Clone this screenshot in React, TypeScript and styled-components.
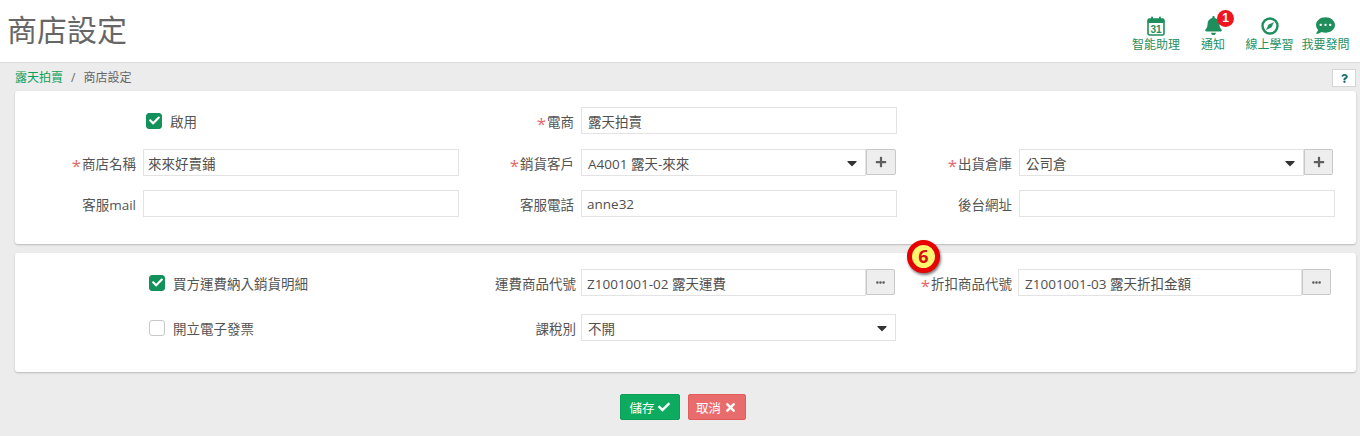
import React from "react";
import styled, { createGlobalStyle } from "styled-components";
import { FaBell, FaCommentDots, FaCheck, FaTimes, FaPlus, FaEllipsisH, FaCaretDown, FaQuestion } from "react-icons/fa";

const Global = createGlobalStyle`
  html, body { margin: 0; padding: 0; background: #ececec; }
  body { font-family: "Open Sans", "Noto Sans CJK TC", sans-serif; font-size: 13.5px; color: #555; }
`;

const Page = styled.div`
  width: 1360px;
  height: 436px;
  overflow: hidden;
  background: #ececec;
  position: relative;
`;
const Header = styled.header`
  height: 62px;
  background: #fff;
  border-bottom: 1px solid #dcdcdc;
  display: flex;
  justify-content: space-between;
`;
const Title = styled.h1`
  margin: 0;
  padding: 9px 0 0 7px;
  font-size: 30px;
  line-height: 42px;
  font-weight: 400;
  color: #666;
`;
const Tools = styled.div`
  display: flex;
  padding: 15px 6px 0 0;
`;
const Tool = styled.div<{ $w: number }>`
  width: ${(p) => p.$w}px;
  display: flex;
  flex-direction: column;
  align-items: center;
  color: #1f8f5f;
  font-size: 12px;
  line-height: 16px;
  position: relative;
`;
const ToolIcon = styled.div`
  height: 21px;
  display: flex;
  align-items: center;
  justify-content: center;
  color: #1e8f5c;
  margin-bottom: 1px;
`;
const Badge = styled.span`
  position: absolute;
  left: 33px;
  top: -5px;
  width: 17px;
  height: 17px;
  border-radius: 50%;
  background: #f0141e;
  color: #fff;
  font: 700 12px/17px "Liberation Sans", sans-serif;
  text-align: center;
`;
const Crumbs = styled.div`
  height: 28px;
  display: flex;
  align-items: center;
  justify-content: space-between;
  padding: 0 4px 0 15px;
  font-size: 12px;
  color: #666;
`;
const CrumbLink = styled.span`
  color: #0aa05a;
`;
const CrumbSep = styled.span`
  margin: 0 8px;
`;
const Help = styled.button`
  width: 24px;
  height: 18px;
  padding: 0;
  background: #fff;
  border: 1px solid #d5d5d5;
  display: flex;
  align-items: center;
  justify-content: center;
  color: #1b6f6f;
  position: relative;
  top: 1px;
`;
const Card = styled.section<{ $h: number; $pt: number }>`
  width: 1341px;
  margin: 0 0 9px 15px;
  height: ${(p) => p.$h}px;
  padding-top: ${(p) => p.$pt}px;
  box-sizing: border-box;
  background: #fff;
  border-radius: 3px;
  box-shadow: 0 1px 2px rgba(0, 0, 0, 0.22);
`;
const Row = styled.div<{ $mb?: number }>`
  display: grid;
  grid-template-columns: 128px 316px 122px 316px 122px 316px;
  height: 27px;
  margin-bottom: ${(p) => p.$mb ?? 0}px;
  align-items: center;
`;
const Label = styled.label<{ $pr?: number }>`
  display: flex;
  justify-content: flex-end;
  align-items: center;
  padding-right: ${(p) => p.$pr ?? 7}px;
  padding-top: 1px;
  color: #555;
  white-space: nowrap;
`;
const Star = styled.span`
  color: #e8686b;
  font-size: 17px;
  line-height: 13px;
  margin-right: 1px;
  position: relative;
  top: 2px;
`;
const Input = styled.div<{ $w?: number; $pl?: number }>`
  box-sizing: border-box;
  height: 27px;
  width: ${(p) => (p.$w ? `${p.$w}px` : "100%")};
  flex: none;
  border: 1px solid #e3e3e3;
  background: #fff;
  padding: 0 5px 0 ${(p) => p.$pl ?? 6}px;
  color: #505050;
  display: flex;
  align-items: center;
  justify-content: space-between;
  white-space: nowrap;
`;
const Group = styled.div`
  display: flex;
  align-items: flex-start;
`;
const Add = styled.button<{ $w: number }>`
  box-sizing: border-box;
  width: ${(p) => p.$w}px;
  height: 26px;
  flex: none;
  padding: 0;
  background: #eeeeee;
  border: 1px solid #c8c8c8;
  border-radius: 0 2px 2px 0;
  color: #5f5f5f;
  display: flex;
  align-items: center;
  justify-content: center;
`;
const Check = styled.label<{ $ml: number }>`
  grid-column: 1 / 3;
  margin-left: ${(p) => p.$ml}px;
  display: flex;
  align-items: center;
  gap: 8px;
  color: #555;
`;
const Box = styled.span<{ $on?: boolean }>`
  box-sizing: border-box;
  width: 16px;
  height: 16px;
  border-radius: 3px;
  background: ${(p) => (p.$on ? "#12915a" : "#fff")};
  border: 1px solid ${(p) => (p.$on ? "#12915a" : "#c8c8c8")};
  color: #fff;
  display: flex;
  align-items: center;
  justify-content: center;
`;
const Shift = styled.div`
  display: flex;
  margin-left: -1px;
`;
const Actions = styled.div`
  display: flex;
  justify-content: center;
  gap: 8px;
  padding-top: 13px;
  margin-left: 5px;
`;
const Btn = styled.button<{ $bg: string; $bd: string; $w: number }>`
  box-sizing: border-box;
  width: ${(p) => p.$w}px;
  height: 26px;
  padding: 0;
  border: 1px solid ${(p) => p.$bd};
  border-radius: 2px;
  background: ${(p) => p.$bg};
  color: #fff;
  font: inherit;
  font-size: 12.5px;
  display: flex;
  align-items: center;
  justify-content: center;
  gap: 3px;
`;
const Marker = styled.div`
  position: absolute;
  left: 907px;
  top: 240px;
  box-sizing: border-box;
  width: 33px;
  height: 33px;
  border-radius: 50%;
  background: #fdf76f;
  border: 5px solid #e60000;
  box-shadow: 1px 2px 3px rgba(0, 0, 0, 0.55);
  color: #d81010;
  font: 700 18px/23px "Open Sans", sans-serif;
  text-align: center;
`;

const Calendar = () => (
  <svg width="18" height="20" viewBox="0 0 18 20">
    <rect x="1" y="3" width="16" height="16" rx="1.5" fill="#fff" stroke="#1e8f5c" strokeWidth="1.6" />
    <rect x="1" y="3" width="16" height="4" fill="#1e8f5c" />
    <rect x="4" y="0.5" width="2" height="4" rx="1" fill="#1e8f5c" />
    <rect x="12" y="0.5" width="2" height="4" rx="1" fill="#1e8f5c" />
    <text x="9" y="16.5" textAnchor="middle" fontSize="10" fontWeight="700" fontFamily="Liberation Sans" fill="#1e8f5c">31</text>
  </svg>
);
const Compass = () => (
  <svg width="18" height="18" viewBox="0 0 18 18">
    <circle cx="9" cy="9" r="7.5" fill="none" stroke="#1e8f5c" strokeWidth="2.4" />
    <path d="M13 5 L10.4 10.4 L5 13 L7.6 7.6 Z" fill="#1e8f5c" />
  </svg>
);

const Req = () => <Star>*</Star>;
const Caret = () => <FaCaretDown size={16} color="#333" />;

export default function App() {
  return (
    <Page>
      <Global />
      <Header>
        <Title>商店設定</Title>
        <Tools>
          <Tool $w={56}><ToolIcon><Calendar /></ToolIcon>智能助理</Tool>
          <Tool $w={58}>
            <ToolIcon><FaBell size={19} /></ToolIcon>通知
            <Badge>1</Badge>
          </Tool>
          <Tool $w={55}><ToolIcon><Compass /></ToolIcon>線上學習</Tool>
          <Tool $w={57}><ToolIcon><FaCommentDots size={19} /></ToolIcon>我要發問</Tool>
        </Tools>
      </Header>
      <Crumbs>
        <div><CrumbLink>露天拍賣</CrumbLink><CrumbSep>/</CrumbSep>商店設定</div>
        <Help><FaQuestion size={9} /></Help>
      </Crumbs>
      <Card $h={153} $pt={16}>
        <Row $mb={15}>
          <Check $ml={131}><Box $on><FaCheck size={11} /></Box>啟用</Check>
          <Label><Req />電商</Label>
          <Input>露天拍賣</Input>
        </Row>
        <Row $mb={14}>
          <Label><Req />商店名稱</Label>
          <Input $pl={4}>來來好賣鋪</Input>
          <Label><Req />銷貨客戶</Label>
          <Group>
            <Input $w={285}>A4001 露天-來來<Caret /></Input>
            <Add $w={30}><FaPlus size={12} /></Add>
          </Group>
          <Label><Req />出貨倉庫</Label>
          <Group>
            <Input $w={285}>公司倉<Caret /></Input>
            <Add $w={29}><FaPlus size={12} /></Add>
          </Group>
        </Row>
        <Row>
          <Label>客服mail</Label>
          <Input />
          <Label>客服電話</Label>
          <Input $pl={5}>anne32</Input>
          <Label>後台網址</Label>
          <Input />
        </Row>
      </Card>
      <Card $h={119} $pt={16}>
        <Row $mb={18}>
          <Check $ml={134}><Box $on><FaCheck size={11} /></Box>買方運費納入銷貨明細</Check>
          <Label $pr={5}>運費商品代號</Label>
          <Group>
            <Input $w={285} $pl={5}>Z1001001-02 露天運費</Input>
            <Add $w={29}><FaEllipsisH size={9} /></Add>
          </Group>
          <Label><Req />折扣商品代號</Label>
          <Shift>
            <Input $w={284}>Z1001001-03 露天折扣金額</Input>
            <Add $w={29}><FaEllipsisH size={9} /></Add>
          </Shift>
        </Row>
        <Row>
          <Check $ml={134}><Box />開立電子發票</Check>
          <Label $pr={5}>課稅別</Label>
          <Input $w={315}>不開<Caret /></Input>
        </Row>
      </Card>
      <Actions>
        <Btn $bg="#0dab60" $bd="#0a9f58" $w={60}>儲存<FaCheck size={12} /></Btn>
        <Btn $bg="#e96c6c" $bd="#e45b5b" $w={58}>取消<FaTimes size={13} /></Btn>
      </Actions>
      <Marker>6</Marker>
    </Page>
  );
}
